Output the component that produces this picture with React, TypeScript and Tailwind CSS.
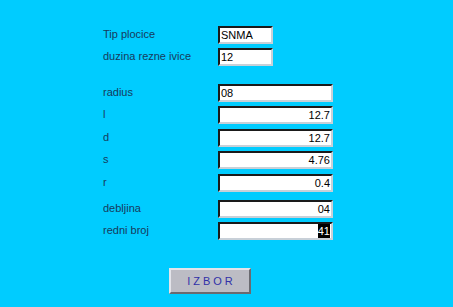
import React from "react";

type Row = {
  label: string;
  value: string;
  wide?: boolean;
  right?: boolean;
  mt: string;
  selected?: boolean;
};

const rows: Row[] = [
  { label: "Tip plocice", value: "SNMA", mt: "mt-0" },
  { label: "duzina rezne ivice", value: "12", mt: "mt-[4px]" },
  { label: "radius", value: "08", wide: true, mt: "mt-[18px]" },
  { label: "l", value: "12.7", wide: true, right: true, mt: "mt-[4px]" },
  { label: "d", value: "12.7", wide: true, right: true, mt: "mt-[5px]" },
  { label: "s", value: "4.76", wide: true, right: true, mt: "mt-[4px]" },
  { label: "r", value: "0.4", wide: true, right: true, mt: "mt-[5px]" },
  { label: "debljina", value: "04", wide: true, right: true, mt: "mt-[8px]" },
  { label: "redni broj", value: "41", wide: true, right: true, mt: "mt-[4px]", selected: true },
];

function Field({ row }: { row: Row }) {
  return (
    <div
      className={`h-[18px] ${row.wide ? "w-[115px]" : "w-[55px]"} bg-white border-2 border-t-[#1a1a1a] border-l-[#1a1a1a] border-b-[#c8d0d8] border-r-[#c8d0d8] flex items-center px-[1px] ${
        row.right ? "justify-end" : "justify-start"
      }`}
    >
      {row.selected ? (
        <span className="bg-black text-white leading-[14px]">{row.value}</span>
      ) : (
        <span className="text-black leading-[14px]">{row.value}</span>
      )}
    </div>
  );
}

export default function App() {
  return (
    <div
      className="w-[453px] h-[307px] bg-[#00ccff] overflow-hidden pt-[26px] pl-[103px] text-[11px]"
      style={{ fontFamily: '"Liberation Sans", Arial, sans-serif' }}
    >
      <div className="flex flex-col">
        {rows.map((row) => (
          <div key={row.label} className={`flex items-center h-[18px] ${row.mt}`}>
            <div className="w-[115px] text-[#173a5c] -mt-[2px]">{row.label}</div>
            <Field row={row} />
          </div>
        ))}
      </div>

      {/* submit button */}
      <div className="mt-[28px] ml-[66px]">
        <button className="w-[82px] h-[26px] bg-[#bcbcc4] border-2 border-t-[#e4e4ea] border-l-[#e4e4ea] border-b-[#6a6a70] border-r-[#6a6a70] text-[#3030a8] text-[11px] tracking-[3px] pl-[3px]">
          IZBOR
        </button>
      </div>
    </div>
  );
}
